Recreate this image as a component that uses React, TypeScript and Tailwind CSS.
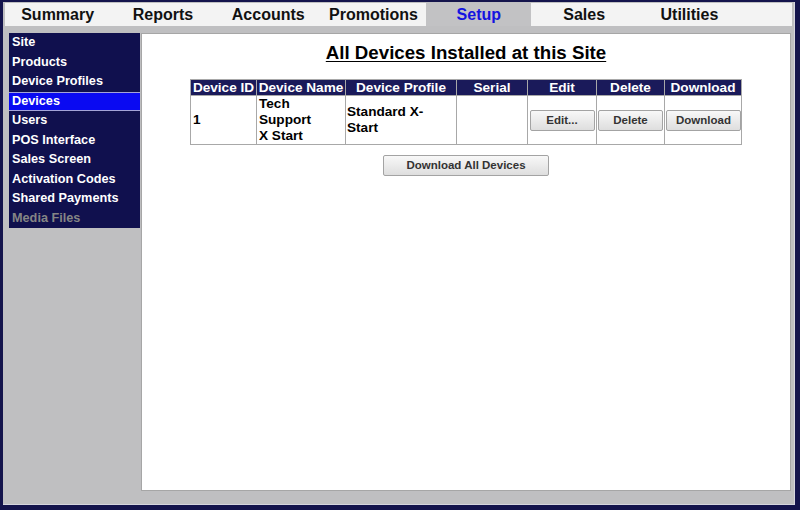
import { useState } from "react";

const tabs = ["Summary", "Reports", "Accounts", "Promotions", "Setup", "Sales", "Utilities"];

const menuItems = [
	"Site",
	"Products",
	"Device Profiles",
	"Devices",
	"Users",
	"POS Interface",
	"Sales Screen",
	"Activation Codes",
	"Shared Payments",
	"Media Files",
];

const columns = [
	{ label: "Device ID", width: 66 },
	{ label: "Device Name", width: 89 },
	{ label: "Device Profile", width: 111 },
	{ label: "Serial", width: 71 },
	{ label: "Edit", width: 69 },
	{ label: "Delete", width: 68 },
	{ label: "Download", width: 77 },
];

function GrayButton({ label, className = "" }: { label: string; className?: string }) {
	return (
		<button
			className={`h-[21px] rounded-[2px] border border-[#a3a3a3] bg-gradient-to-b from-[#f8f8f8] to-[#dedede] text-[11.5px] font-bold leading-[19px] text-[#333] ${className}`}
		>
			{label}
		</button>
	);
}

export default function App() {
	const [activeTab] = useState("Setup");
	const [activeItem] = useState("Devices");

	return (
		<div className="h-[510px] w-[800px] bg-[#14144c] pb-[5px] pl-[3px] pr-[5px] pt-[2px] font-['Liberation_Sans',Arial,sans-serif]">
			<div className="flex h-full flex-col border-b border-r border-[#d6d6de] bg-[#bfbfc1] pt-[1px]">
				{/* Tabs */}
				<div className="mx-[2px] flex h-[23px] bg-[#f3f3f3]">
					{tabs.map((tab) => (
						<div
							key={tab}
							className={`flex w-[105.3px] items-center justify-center text-[16px] font-bold ${
								tab === activeTab ? "bg-[#c2c2c4] text-[#1414e0]" : "text-[#111]"
							}`}
						>
							{tab}
						</div>
					))}
					<div className="flex-1" />
				</div>

				<div className="mt-[7px] flex h-[458px]">
					{/* Side menu */}
					<div className="ml-[6px] h-fit w-[131px] bg-[#10104e]">
						{menuItems.map((item) => (
							<div
								key={item}
								className={`flex h-[19.5px] items-center pl-[3px] text-[12.7px] font-bold ${
									item === activeItem
										? "border-y border-[#a4a4d8] bg-[#0a0af2] text-white"
										: item === "Media Files"
											? "text-[#858585]"
											: "text-white"
								}`}
							>
								{item}
							</div>
						))}
					</div>

					{/* Content */}
					<div className="ml-[1px] flex w-[650px] flex-col items-center border border-[#a6a6a6] bg-white pt-[8px]">
						<h1 className="text-[18.7px] font-bold leading-[22px] text-black underline underline-offset-[2px]">
							All Devices Installed at this Site
						</h1>

						<table className="mt-[15px] w-[551px] table-fixed border-collapse border border-[#a8a8a8] text-[13.6px] font-bold text-black">
							<colgroup>
								{columns.map((col) => (
									<col key={col.label} style={{ width: col.width }} />
								))}
							</colgroup>
							<thead>
								<tr className="h-[16px] bg-[#1a1a5a] text-white">
									{columns.map((col) => (
										<th key={col.label} className="border border-[#a8a8a8] p-0 text-center leading-[15px] whitespace-nowrap">
											{col.label}
										</th>
									))}
								</tr>
							</thead>
							<tbody>
								<tr className="h-[48px]">
									<td className="border border-[#a8a8a8] px-[2px] align-middle leading-[16px]">1</td>
									<td className="border border-[#a8a8a8] px-[2px] align-middle leading-[16px]">
										Tech
										<br />
										Support
										<br />
										X Start
									</td>
									<td className="border border-[#a8a8a8] px-[1px] align-middle leading-[16px]">
										Standard X-
										<br />
										Start
									</td>
									<td className="border border-[#a8a8a8]" />
									<td className="border border-[#a8a8a8] px-[1px] text-center align-middle">
										<GrayButton label="Edit..." className="w-[65px]" />
									</td>
									<td className="border border-[#a8a8a8] px-[1px] text-center align-middle">
										<GrayButton label="Delete" className="w-[65px]" />
									</td>
									<td className="border border-[#a8a8a8] px-[1px] text-center align-middle">
										<GrayButton label="Download" className="w-[75px]" />
									</td>
								</tr>
							</tbody>
						</table>

						<GrayButton label="Download All Devices" className="mt-[10px] w-[166px]" />
					</div>
				</div>
			</div>
		</div>
	);
}
